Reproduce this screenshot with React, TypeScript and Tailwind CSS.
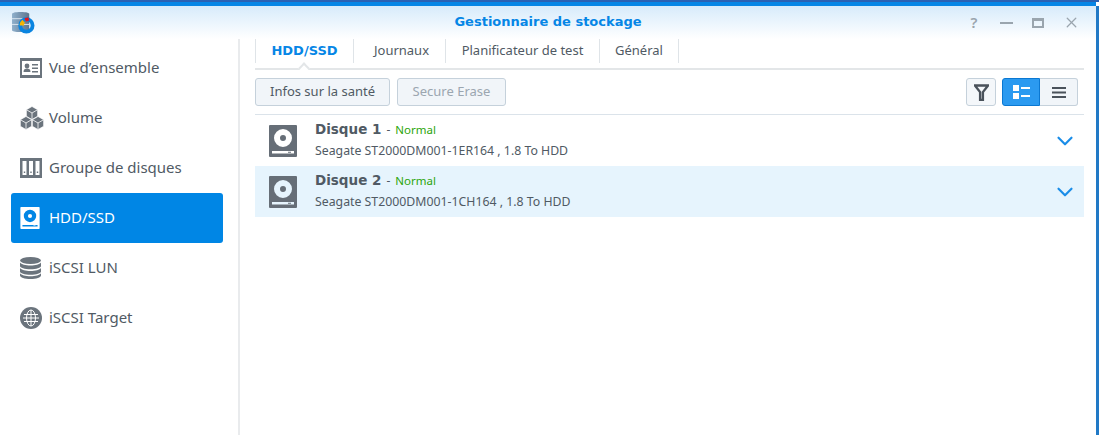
import { ChevronDown, X } from "lucide-react"

const sans = "font-['Noto_Sans','Liberation_Sans',sans-serif]"
const bold = "font-['DejaVu_Sans','Liberation_Sans',sans-serif] font-bold"

function OverviewIcon({ className }: { className?: string }) {
  return (
    <svg viewBox="0 0 22 20" className={className} fill="currentColor">
      <path fillRule="evenodd" d="M0 0h22v20H0zM2 3v14h18V3z" />
      <circle cx="7" cy="8" r="2.4" />
      <path d="M3.500 14c0-2.400 1.500-3.400 3.500-3.400s3.500 1 3.500 3.400zM12 6h6v1.500h-6zM12 9.500h6V11h-6zM12 13h6v1.500h-6z" />
    </svg>
  )
}

function Cube({ x, y }: { x: number; y: number }) {
  return (
    <g transform={`translate(${x} ${y})`}>
      <path d="M0-6.500l5.600 3.200v6.600L0 6.500l-5.600-3.200v-6.600z" fill="currentColor" stroke="#fff" strokeWidth="0.6" />
      <path d="M0 0l5.600-3.300M0 0l-5.600-3.300M0 0v6.500" fill="none" stroke="#fff" strokeWidth="0.8" />
    </g>
  )
}

function VolumeIcon({ className }: { className?: string }) {
  return (
    <svg viewBox="0 0 24 24" className={className}>
      <Cube x={12} y={7} />
      <Cube x={6} y={17} />
      <Cube x={18} y={17} />
    </svg>
  )
}

function GroupIcon({ className }: { className?: string }) {
  return (
    <svg viewBox="0 0 22 20" className={className} fill="currentColor">
      <path fillRule="evenodd" d="M0 0h22v20H0zM2.500 3v14h4V3zM9 3v14h4V3zM15.500 3v14h4V3z" />
      <path d="M3.800 13.500h1.400V15H3.800zM10.300 13.500h1.400V15h-1.400zM16.800 13.500h1.400V15h-1.400z" />
    </svg>
  )
}

function DiskIcon({ className }: { className?: string }) {
  return (
    <svg viewBox="0 0 28 32" className={className} fill="currentColor">
      <path
        fillRule="evenodd"
        d="M1 0h26a1 1 0 0 1 1 1v30a1 1 0 0 1-1 1H1a1 1 0 0 1-1-1V1a1 1 0 0 1 1-1zM14 4a9 9 0 1 0 0 18a9 9 0 0 0 0-18zM14 10a3 3 0 1 1 0 6a3 3 0 0 1 0-6zM3 26v2.500h22V26zM19 26.800h3v1h-3z"
      />
    </svg>
  )
}

function DatabaseIcon({ className }: { className?: string }) {
  return (
    <svg viewBox="0 0 21 22" className={className} fill="currentColor">
      <ellipse cx="10.500" cy="3.500" rx="10.500" ry="3.500" />
      <path d="M0 5.500c1.500 2 5.500 3 10.500 3s9-1 10.500-3V9c0 1.800-4.700 3.300-10.500 3.300S0 10.800 0 9zM0 11c1.500 2 5.500 3 10.500 3s9-1 10.500-3v3.500c0 1.800-4.700 3.300-10.500 3.300S0 16.300 0 14.500zM0 16.200c1.500 2 5.500 3 10.500 3s9-1 10.500-3v2.300c0 1.900-4.700 3.500-10.500 3.500S0 20.400 0 18.500z" />
    </svg>
  )
}

function GlobeIcon({ className }: { className?: string }) {
  return (
    <svg viewBox="0 0 22 22" className={className}>
      <circle cx="11" cy="11" r="11" fill="currentColor" />
      <g fill="none" stroke="#fff" strokeWidth="1">
        <ellipse cx="11" cy="11" rx="4.500" ry="8" />
        <path d="M11 3v16M4 7.500h14M3 11h16M4 14.500h14" />
      </g>
    </svg>
  )
}

function AppLogo() {
  return (
    <svg viewBox="0 0 24 23" className="w-[23px] h-[22px]">
      <defs>
        <linearGradient id="can" x1="0" x2="1" y1="0" y2="0">
          <stop offset="0" stopColor="#8fb0cc" />
          <stop offset="1" stopColor="#5d7690" />
        </linearGradient>
      </defs>
      <path d="M0 2c0-1 3-2 9-2s9 1 9 2v17c0 1-3 2-9 2s-9-1-9-2z" fill="url(#can)" />
      <path d="M0 7h18M0 13h18" stroke="#dbe6ef" strokeWidth="1" />
      <circle cx="15" cy="14" r="6.500" fill="none" stroke="#0a84e0" strokeWidth="4" />
      <path d="M8 14a7 7 0 0 1 3-6l2.500 3.500a3 3 0 0 0-1 2.500z" fill="#f6b400" />
      <path d="M13 6.500l4-1 1 3.500-3.500 1z" fill="#e8141c" />
    </svg>
  )
}

const sidebarItems = [
  { label: "Vue d’ensemble", icon: <OverviewIcon className="w-[22px] h-[20px]" /> },
  { label: "Volume", icon: <VolumeIcon className="w-[24px] h-[24px]" /> },
  { label: "Groupe de disques", icon: <GroupIcon className="w-[22px] h-[20px]" /> },
  { label: "HDD/SSD", icon: <DiskIcon className="w-[20px] h-[22px]" />, active: true },
  { label: "iSCSI LUN", icon: <DatabaseIcon className="w-[21px] h-[22px]" /> },
  { label: "iSCSI Target", icon: <GlobeIcon className="w-[22px] h-[22px]" /> },
]

const tabs = [
  { label: "HDD/SSD", width: "w-[98px]", active: true },
  { label: "Journaux", width: "w-[92px] pl-[4px]" },
  { label: "Planificateur de test", width: "w-[154px]" },
  { label: "Général", width: "w-[79px]" },
]

const disks = [
  { name: "Disque 1", model: "Seagate ST2000DM001-1ER164 , 1.8 To HDD" },
  { name: "Disque 2", model: "Seagate ST2000DM001-1CH164 , 1.8 To HDD", selected: true },
]

export default function App() {
  return (
    <div className={`w-[1099px] h-[435px] overflow-hidden bg-white flex flex-col ${sans}`}>
      <div className="h-[2px] bg-[#2a62b4]" />
      <div className="h-[4px] bg-[#0686e6] mr-[3px]" />
      <div className="flex-1 flex flex-col min-h-0 border-r-[3px] border-[#2179c6]">
        {/* title bar */}
        <div className="h-[33px] flex items-center bg-gradient-to-b from-[#d7ebfb] to-white relative">
          <div className="ml-3">
            <AppLogo />
          </div>
          <div className={`absolute inset-x-0 pb-[1px] text-center text-[13px] text-[#0686e6] ${bold}`}>
            Gestionnaire de stockage
          </div>
          <div className="ml-auto flex items-center gap-[19px] pr-[16px] text-[#9aa5ae]">
            <span className="w-[14px] text-center text-[15px] leading-none font-semibold">?</span>
            <span className="w-[13px] h-[2px] bg-[#9aa5ae]" />
            <span className="w-[12px] h-[10px] border-2 border-t-[3px] border-[#9aa5ae]" />
            <X size={17} strokeWidth={1.75} />
          </div>
        </div>

        <div className="flex-1 flex min-h-0">
          {/* sidebar */}
          <div className="w-[240px] shrink-0 border-r-2 border-[#e9ebed] pt-[4px] pl-[11px] pr-[15px]">
            {sidebarItems.map((item) => (
              <div
                key={item.label}
                className={`h-[50px] flex items-center rounded-[3px] pl-[9px] text-[15px] ${
                  item.active ? "bg-[#0086e5] text-white" : "text-[#505a64]"
                }`}
              >
                <span className={`w-[29px] flex items-center ${item.active ? "text-white" : "text-[#6b747d]"}`}>
                  {item.icon}
                </span>
                <span className="pb-[2px]">{item.label}</span>
              </div>
            ))}
          </div>

          {/* main */}
          <div className="flex-1 pl-[15px] pr-[12px] min-w-0">
            <div className="relative h-[31px] border-b-2 border-[#e3e6e8] flex items-start">
              <div className="flex h-[24px] items-center border-l border-[#dfe4e8]">
                {tabs.map((tab) => (
                  <div
                    key={tab.label}
                    className={`${tab.width} h-full flex items-center justify-center border-r border-[#dfe4e8] ${
                      tab.active ? `text-[13px] text-[#0686e6] ${bold}` : "text-[13px] text-[#505a64]"
                    }`}
                  >
                    {tab.label}
                  </div>
                ))}
              </div>
              <div className="absolute left-[45px] top-[25px] w-[8px] h-[8px] rotate-45 bg-white border-l-2 border-t-2 border-[#e3e6e8]" />
            </div>

            <div className="flex items-start h-[45px] border-b border-[#dbe3ea] pt-[8px]">
              <button className="h-[28px] w-[135px] rounded-[3px] border border-[#c5d1db] bg-[#f1f5f9] text-[13px] text-[#505a64]">
                Infos sur la santé
              </button>
              <button className="h-[28px] w-[109px] ml-[7px] rounded-[3px] border border-[#c5d1db] bg-[#f1f5f9] text-[13px] text-[#9ba6b0]">
                Secure Erase
              </button>
              <button className="ml-auto h-[28px] w-[30px] rounded-[3px] border border-[#c5d1db] bg-[#f4f7fa] flex items-center justify-center">
                <svg viewBox="0 0 16 18" className="w-[15px] h-[17px]" fill="none" stroke="#4a525b" strokeWidth="2.500">
                  <path d="M1 1.500h14L9.500 8.500V17h-3V8.500z" />
                </svg>
              </button>
              <div className="ml-[6px] mr-[6px] flex h-[28px]">
                <div className="w-[38px] rounded-l-[3px] border border-[#0a78d2] bg-[#2b9af0] flex items-center justify-center">
                  <svg viewBox="0 0 17 14" className="w-[17px] h-[14px]" fill="#fff">
                    <path d="M0 0h6v6H0zM0 8h6v6H0zM8 2h9v2H8zM8 10h9v2H8z" />
                  </svg>
                </div>
                <div className="w-[38px] rounded-r-[3px] border border-l-0 border-[#c5d1db] bg-[#f1f5f9] flex items-center justify-center">
                  <svg viewBox="0 0 14 11" className="w-[14px] h-[11px]" fill="#4a525b">
                    <path d="M0 0h14v2H0zM0 4.500h14v2H0zM0 9h14v2H0z" />
                  </svg>
                </div>
              </div>
            </div>

            {disks.map((disk) => (
              <div
                key={disk.name}
                className={`h-[51px] flex items-center pl-[14px] pr-[6px] ${disk.selected ? "bg-[#e6f4fd]" : ""}`}
              >
                <DiskIcon className="w-[28px] h-[32px] text-[#666e77]" />
                <div className="ml-[18px] pb-[2px]">
                  <div className="flex items-baseline leading-[20px]">
                    <span className={`text-[13.500px] text-[#505a64] ${bold}`}>{disk.name}</span>
                    <span className="ml-[5px] text-[12px] text-[#505a64]">-</span>
                    <span className="ml-[5px] text-[11.500px] text-[#2ca50a]">Normal</span>
                  </div>
                  <div className="mt-[1px] text-[12.300px] leading-[19px] text-[#505a64]">{disk.model}</div>
                </div>
                <ChevronDown size={26} strokeWidth={2} className="ml-auto text-[#1a8de8]" />
              </div>
            ))}
          </div>
        </div>
      </div>
    </div>
  )
}
